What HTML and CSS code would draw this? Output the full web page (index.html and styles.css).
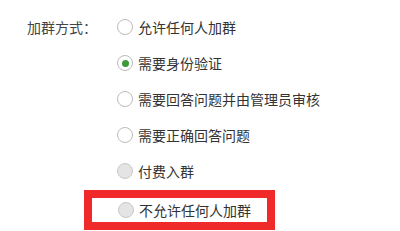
FILE: index.html
```html
<!DOCTYPE html>
<html lang="zh-CN">
<head>
    <meta charset="UTF-8">
    <meta name="viewport" content="width=device-width, initial-scale=1.0">
    <title>加群方式</title>
    <link rel="stylesheet" href="styles.css">
</head>
<body>
    <div class="form-row">
        <div class="form-label">加群方式：</div>
        <div class="options">
            <label class="option"><span class="radio"></span>允许任何人加群</label>
            <label class="option"><span class="radio checked"></span>需要身份验证</label>
            <label class="option"><span class="radio"></span>需要回答问题并由管理员审核</label>
            <label class="option"><span class="radio"></span>需要正确回答问题</label>
            <label class="option"><span class="radio disabled"></span>付费入群</label>
            <div class="highlight">
                <label class="option"><span class="radio disabled"></span>不允许任何人加群</label>
            </div>
        </div>
    </div>
</body>
</html>
```

FILE: styles.css
```css
body {
    margin: 0;
    background-color: #fff;
    font-family: "Noto Sans CJK SC", "Noto Sans", sans-serif;
    font-size: 14px;
    color: #333;
}
.form-row {
    display: flex;
    padding: 9px 0 0 27px;
}
.form-label {
    width: 90px;
    height: 36px;
    line-height: 36px;
    color: #444;
}
.options {
    display: flex;
    flex-direction: column;
}
.option {
    display: flex;
    align-items: center;
    height: 36px;
}
.radio {
    width: 14px;
    height: 14px;
    border: 1px solid #bbb;
    border-radius: 50%;
    background-color: #fff;
    margin-right: 5px;
    display: flex;
    align-items: center;
    justify-content: center;
}
.radio.checked::after {
    content: "";
    width: 7px;
    height: 7px;
    border-radius: 50%;
    background-color: #3a9b3a;
}
.radio.disabled {
    background-color: #e4e4e4;
    border-color: #c8c8c8;
}
.highlight {
    margin: 1px 0 0 -33px;
    width: 149px;
    border: 8px solid #f02a2a;
    padding-left: 26px;
}
.highlight .option {
    height: 24px;
}
```
